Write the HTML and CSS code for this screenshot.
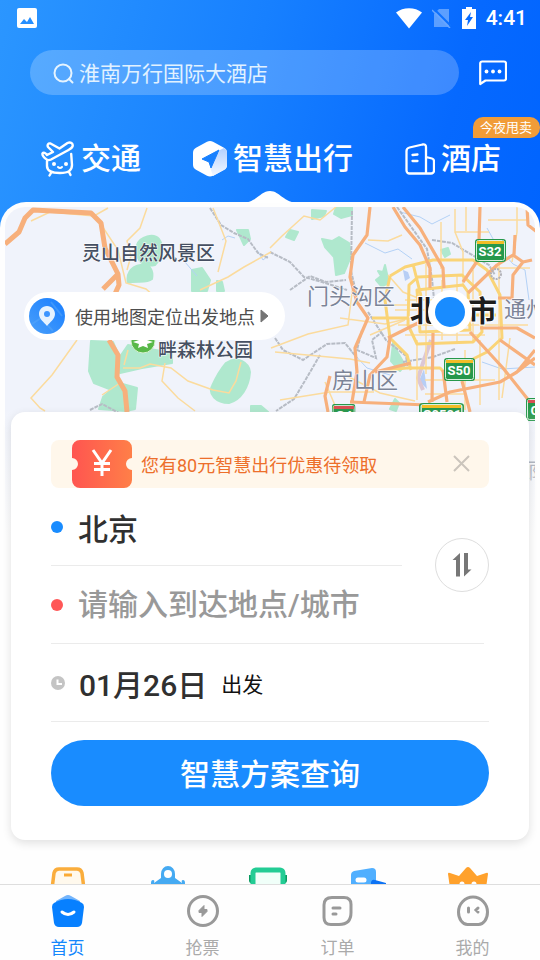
FILE: index.html
```html
<!DOCTYPE html>
<html lang="zh-CN">
<head>
<meta charset="utf-8">
<meta name="viewport" content="width=device-width, initial-scale=1">
<title>智慧出行</title>
<link rel="stylesheet" href="styles.css">
</head>
<body>
<div class="screen">
  <header class="header">
    <div class="status">
      <svg width="20" height="20" viewBox="0 0 20 20"><rect width="20" height="20" rx="2" fill="#fff"/><path d="M3 16l4-5 3 3 3-5 4 7z" fill="#268fff"/></svg>
      <span class="status-right">
        <svg width="26" height="21" viewBox="0 0 26 21"><path d="M0 4.500C7-1.200 19-1.200 26 4.500L13 20.500z" fill="#fff"/></svg>
        <svg width="20" height="20" viewBox="0 0 20 20"><path d="M7 1h10v18H2V6z" fill="#5c9fff"/><path d="M2 1l17 17" stroke="#0b70ff" stroke-width="2"/><path d="M0 2l18 18" stroke="#68a6ff" stroke-width="1.500"/></svg>
        <svg width="14" height="22" viewBox="0 0 14 22"><path d="M4 0h6v2h4v20H0V2h4z" fill="#fff"/><path d="M9 5L3 13h3l-1 6 6-9H8z" fill="#086cff"/></svg>
        <time>4:41</time>
      </span>
    </div>
    <div class="search-row">
      <label class="search">
        <svg width="22" height="22" viewBox="0 0 22 22" fill="none" stroke="#e6f4ff" stroke-width="2" stroke-linecap="round"><circle cx="10" cy="10" r="8.500"/><path d="M16 16l3.500 3.500"/></svg>
        <input type="search" placeholder="淮南万行国际大酒店" aria-label="淮南万行国际大酒店">
      </label>
      <button class="chat" aria-label="消息">
        <svg width="28" height="26" viewBox="0 0 28 26"><path d="M3 1.500h22a2 2 0 0 1 2 2v15a2 2 0 0 1-2 2H6.500L1.200 24V3.500a2 2 0 0 1 2-2z" fill="none" stroke="#fff" stroke-width="2.200" stroke-linejoin="round"/><g fill="#fff"><circle cx="7.500" cy="11.500" r="1.900"/><circle cx="14" cy="11.500" r="1.900"/><circle cx="20.500" cy="11.500" r="1.900"/></g></svg>
      </button>
    </div>
    <nav class="tabs">
      <a href="#traffic" class="tab">
        <svg width="34" height="36" viewBox="0 0 34 36" fill="none" stroke="#fff" stroke-width="2.400" stroke-linecap="round" stroke-linejoin="round"><path d="M5 18c-2-1-4-4-3.500-5.500C2.500 11 4.500 12 6 14l6-3-5-5c-1-2 0-4 2.500-3.500l9 5 8-5.500c3-1.500 6 .500 5 3.500-.500 1.500-2 2.500-4 3.500L10 18.500c-2 1-4 .500-5-.500z"/><path d="M6 20v5c0 5 5 7 13 7s12-2 12-8l-.800-11M10 32l-1.500 2.500M28 31l1.500 3"/><g fill="#fff" stroke="none"><circle cx="13" cy="23" r="2"/><circle cx="25" cy="23" r="2"/></g><path d="M17 26q2 2 4 0" stroke-width="2"/></svg>
        <span>交通</span>
      </a>
      <a href="#smart" class="tab" aria-current="page">
        <svg width="34" height="36" viewBox="0 0 34 36"><defs><linearGradient id="hex" x1="0" y1="0" x2="0" y2="1"><stop offset="0" stop-color="#b3d0ff"/><stop offset="1" stop-color="#f4f8ff"/></linearGradient></defs><path d="M14 .800q3-1.600 6 0l11 6q3 1.600 3 5v12q0 3.500-3 5l-11 6q-3 1.600-6 0l-11-6q-3-1.600-3-5v-12q0-3.500 3-5z" fill="#fff"/><path d="M27 9l4-2q3 1.600 3 5v12q0 3.500-3 5l-11 6-3-9z" fill="url(#hex)"/><path d="M9 18L26 9 18 27l-2-6z" fill="#1780ff" stroke="#1780ff" stroke-linejoin="round"/></svg>
        <span>智慧出行</span>
      </a>
      <a href="#hotel" class="tab">
        <svg width="30" height="32" viewBox="0 0 30 32" fill="none" stroke="#fff" stroke-width="2.300" stroke-linecap="round" stroke-linejoin="round"><path d="M21 30.500H4.500a3 3 0 0 1-3-3V8c0-2 1-3 3-3.500l13-3C20 1 21 2 21 4zM21 14l6 1.500q2 .500 2 3v9a3 3 0 0 1-3 3h-5M7.500 12l5-.500M7.500 18h5"/></svg>
        <span>酒店</span>
        <em class="badge">今夜甩卖</em>
      </a>
    </nav>
  </header>

  <main class="panel">
    <svg class="notch" width="60" height="13" viewBox="0 0 60 13"><path d="M0 13C17 13 20 1 30 1S43 13 60 13z" fill="#fff"/></svg>
    <section class="map-wrap">
      <svg class="map" viewBox="0 0 530 330" preserveAspectRatio="xMidYMin slice">
        <defs>
          <g id="shield"><rect width="31" height="23" rx="3" fill="#26984b"/><rect x="1.500" y="1.500" width="28" height="20" rx="2" fill="none" stroke="#d9f0df"/><rect x="2" y="2" width="27" height="3" fill="#f2bd26"/></g>
        </defs>
        <rect width="530" height="330" fill="#f0f3fb"/>
        <g transform="translate(-5 -207)">
          <g fill="#afe8ce" stroke="#afe8ce" stroke-width="2" stroke-linejoin="round">
            <path d="M137 245c3-9 17-12 22-6 6 8 2 20-4 26-8 2-16-1-18-10zM140 265c8-2 14 4 12 14-6 5-16 1-24 4-2-8 2-16 12-18z"/>
            <path d="M192 270l10-2 8 12-3 11h-15zM217 281l5 1 2 9h-7zM237 230l11 0 2 9-6 6z"/>
            <path d="M91 341l22 1 5 12 0 26-6 10-18-7-5-12zM128 345l44 8 0 10-30 5-22 5-3-12zM119 383l18 5-2 21-9 2-27-2 4-12z"/>
            <path d="M226 363c12-8 23 0 24 9-1 15-9 28-21 31-13 0-21-9-17-17 5-11 8-16 14-23zM251 406l10 0 7 6h-17z"/>
            <path d="M312 210l14 1-2 5-12 3zM336 207h16v8l-11 3-7-4zM290 230l8 2-4 8-8-3zM322 239l10 2 7-4 10 6 2 13-7 17-8 2-2-18-9-10zM385 265l2 9 1 9-6 4-6-7 5-4-3-5 5 1zM441 250l7-2 2 6-5 3zM393 343l5 10 7 12-5 6-9-10zM395 399l4 4-3 8-6-2z"/>
          </g>
          <path d="M403 270l5 2 2 6-5 3zM424 369l3 20-8-8z" fill="#b7cef5"/>
          <g fill="none" stroke="#b3d1f6" stroke-width="1">
            <path d="M365 243l20 10 13-4 14 10M400 212l20 5 12 7 18-9M487 228l10 18 16 18 12 6 4 30M222 240l6-4 7 2M257 250l6 10 5-4"/>
            <path d="M350 350l17 18 23 7M482 362l20 7 33-2M185 262l12 14"/>
          </g>
          <g fill="none" stroke="#b7bcc5" stroke-width="2" stroke-dasharray="4 1">
            <path d="M210 208l11 17 13 8 14 6 10 14 10 5M270 252l20 10 14 15 18 5 25 8M290 290l20-14 16 6 20-2M368 312l18 28 20 16 2 13M352 211l-1 60 6 25M397 207l30 42 5 30 2 20M432 240l20 3 37 22 6 10"/>
            <path d="M362 330l-5 20 19 8-4-18 10-8M275 338l8 12 20 10 24-16 18-1 12 15M320 355l-14 24-12 20-18 12M403 362l30-5 22-8M90 410l12-6 17 9"/>
          </g>
          <path d="M431 340l-7 20-6 18 5 12" fill="none" stroke="#dcc7d4" stroke-width="4"/>
          <g fill="none" stroke="#fbdb9d" stroke-width="1.500">
            <path d="M31 221l19-9 44 4 14-8M147 208l-7 20-13 13 4 15-4 14M98 220l20 30 8 33 20 6 10 9M213 208l6 15 7 18-8 31M270 248l12-12 22-20 16 4 16-13M200 290l28-13 16-10 27-15M77 340l-25 35-21 23 9 10 5 3M128 350l-4 15M102 395l18-12M165 363l-3 18 16 17 17 13M123 368l17 0 10-4 21 4 17 13 25 9 16 3 7-12 5-19"/>
            <path d="M368 240l20 1 14-6M353 285l-5 40-40 9-37 14M275 352l75 7 20 4M340 318l45 6 25-6M370 335l35-15M388 275l15 17 20 8M390 305h30M455 209l0 23 34 0M466 207v24M488 220h39M491 268h39M499 250v150M517 207v25l-5 30M455 232l8 20v33M441 222v47M426 264v110M442 280v60M457 276v67M473 270v72M405 300h80M395 310h35M398 325h130M405 335h80M417 340v60M465 350v60M480 340v65M425 380h70M425 394h40M345 375l35 18 35 8M280 400l50-8 44 0M325 382l12 28M510 338l-8 60"/>
          </g>
          <g fill="none" stroke="#fad477" stroke-width="3" stroke-linejoin="round">
            <path d="M390 276l15-9 28-7h40l14 10 13 25 2 43-15 14-14 7M390 276l-5 24 5 38 17 17 4 15M385 370l22-2h33l6 6M409 285l9-8 44-2 18 17 2 40-9 10-56 2-9-19zM417 290l46-5 5 7 2 38-50 2zM413 264l8 32M372 318h36M476 315h20"/>
          </g>
          <g fill="none" stroke="#f7b07c" stroke-width="3.200" stroke-linejoin="round">
            <path d="M5 244l14-12 6-14 8-8 58 3 10 10 4 25 13 26 1 11-9 20M118 274l-15 15M109 340l9 15-1 22 8 14 2 21" stroke-width="5"/>
            <path d="M370 207l-3 28-14 20-3 22 7 25 11 16-13 30 2 24-5 30M393 207l12 20 15 18 10 23v20M403 207l17 21 23 40 1 20M480 207l-1 33M478 260l-15 22M468 293l29-28 16-10 10 7 9-2M515 235l-1 20M523 262l-10 13-1 23h-14M527 207l1 18 9 7M388 338l32-16M433 333l-1 69M470 332l33 36 27 34M480 328h37l18 10M428 402l22-10 50-10 17-10 18-14M500 340l35 25M350 402l78 3M390 338l-3 19-17 18-6 27M375 372l36-9M462 381l8 31M443 370l4 32M330 376l-5 20 3 16M535 350l-18 22"/>
          </g>
          <circle cx="496" cy="274" r="5" fill="none" stroke="#b2b2b8" stroke-width="2" stroke-dasharray="2 1"/>
          <use href="#shield" x="475" y="239"/><use href="#shield" x="444" y="358"/>
          <use href="#shield" transform="translate(419 403) scale(1.450 1)"/><use href="#shield" transform="translate(332 404) scale(.75 1)"/><use href="#shield" x="526" y="398"/>
          <path d="M334 406h20v3h-20zM528 400h7v3h-7z" fill="#d94f53"/>
          <g class="road-label"><text x="490" y="256">S32</text><text x="459" y="375">S50</text><text x="442" y="419">G0501</text><text x="344" y="420">G4</text><text x="535" y="415">G</text></g>
          <circle cx="143" cy="341" r="12" fill="#58b848" stroke="#d6f0cf"/><path d="M143 332l4 8 6 2-6 2 1 4-5-2-5 2 1-4-6-2 6-2z" fill="#fff"/>
          <g class="place dark"><text x="82" y="260">灵山自然风景区</text><text x="158" y="357">畔森林公园</text></g>
          <g class="place district"><text x="307" y="304">门头沟区</text><text x="332" y="388">房山区</text><text x="504" y="317">通州</text><text x="516" y="478">廊坊</text></g>
          <text class="city" x="410" y="322">北京市</text>
          <circle cx="450" cy="312" r="22" fill="#fff"/><circle cx="450" cy="312" r="15" fill="#198cff"/>
        </g>
      </svg>
      <button class="locate">
        <svg width="36" height="36" viewBox="0 0 36 36"><defs><linearGradient id="pinbg" x1="0" y1="1" x2="1" y2="0"><stop stop-color="#4a9ffa"/><stop offset="1" stop-color="#187eff"/></linearGradient></defs><circle cx="18" cy="18" r="18" fill="url(#pinbg)"/><path d="M3 26l9-6 12 13M22 4l11 14" fill="none" stroke="#57a7fa" stroke-width="2" opacity=".5"/><path d="M18 8c5 0 8 4 8 8 0 5-5 8-8 12-3-4-8-7-8-12 0-4 3-8 8-8z" fill="#e5f2ff"/><circle cx="18" cy="16" r="3" fill="#3c95ff"/></svg>
        <span>使用地图定位出发地点</span>
        <svg width="9" height="14" viewBox="0 0 9 14"><path d="M1 1l7 6-7 6z" fill="#747474" stroke="#747474" stroke-linejoin="round"/></svg>
      </button>
    </section>

    <form class="card">
      <div class="coupon">
        <svg width="60" height="48" viewBox="0 0 60 48"><defs><linearGradient id="ticket"><stop stop-color="#ff5550"/><stop offset="1" stop-color="#ff7f48"/></linearGradient></defs><path d="M8 0h44a8 8 0 0 1 8 8v10a6 6 0 0 0 0 12v10a8 8 0 0 1-8 8H8a8 8 0 0 1-8-8V30a6 6 0 0 0 0-12V8a8 8 0 0 1 8-8z" fill="url(#ticket)"/><path d="M21 10l9 13 9-13M30 22v14M22 23.500h16M22 29.500h16" fill="none" stroke="#fff" stroke-width="3"/></svg>
        <p>您有80元智慧出行优惠待领取</p>
        <button type="button" class="close" aria-label="关闭"><svg width="18" height="18" viewBox="0 0 18 18"><path d="M1 1l15 15M16 1L1 16" stroke="#cbc5bc" stroke-width="2"/></svg></button>
      </div>
      <div class="route">
        <label class="field from"><i class="dot blue"></i><input type="text" value="北京" aria-label="出发"></label>
        <label class="field to"><i class="dot red"></i><input type="text" placeholder="请输入到达地点/城市" aria-label="请输入到达地点/城市"></label>
        <button type="button" class="swap" aria-label="交换"><svg width="22" height="26" viewBox="0 0 22 26" fill="#777"><path d="M5 24.500V8H1.500L9 1v23.500zM13 1h4v16.500h3.500L13 24.500z"/></svg></button>
      </div>
      <button type="button" class="field date">
        <svg width="14" height="14" viewBox="0 0 14 14"><circle cx="7" cy="7" r="7" fill="#c4c4c4"/><path d="M6.500 3.500V8H11" stroke="#fff" stroke-width="2" fill="none"/></svg>
        <strong>01月26日</strong><span>出发</span>
      </button>
      <button type="submit" class="submit">智慧方案查询</button>
    </form>

    <div class="links">
      <svg width="36" height="36" viewBox="0 0 36 36"><path d="M9 3h18q4 0 5 4l2 16v12H2V23L4 7q1-4 5-4z" fill="#fff9ed" stroke="#faad3c" stroke-width="3.500"/><path d="M14 9h8" stroke="#faaa35" stroke-width="3"/></svg>
      <svg width="34" height="36" viewBox="0 0 34 36"><path d="M10 8a7 8 0 0 1 14 0v4l7 5q-1-3 1-3 2 0 2 3v19H0V17q0-3 2-3 2 0 1 3l7-5z" fill="#45aaf2"/><circle cx="17" cy="8" r="4" fill="#fff"/></svg>
      <svg width="38" height="36" viewBox="0 0 38 36"><path d="M0 9h5v8H2q-2 0-2-3zM33 9h5v5q0 3-2 3h-3z" fill="#089b60"/><rect x="4" y="4" width="30" height="30" rx="3" fill="#f0fff9" stroke="#23cc94" stroke-width="5"/></svg>
      <svg width="36" height="36" viewBox="0 0 36 36"><path d="M1 9q0-3 3-4l18-3q4 0 4 4v30H1z" fill="#50afff"/><path d="M21 16q1-3 4-2l11 3v19H21z" fill="#0d73f4"/><path d="M8 14h6" stroke="#fff" stroke-width="5" stroke-linecap="round"/></svg>
      <svg width="40" height="36" viewBox="0 0 40 36"><path d="M0 8q0-2 2-1l9 3 7-8q2-2 4 0l7 8 9-3q2-1 2 1l-4 28H4z" fill="#ffa12c"/><path d="M14 20v-2M26 20v-2" stroke="#fff" stroke-width="5" stroke-linecap="round"/></svg>
    </div>
  </main>

  <nav class="bottom">
    <a href="#home" aria-current="page">
      <svg width="34" height="34" viewBox="0 0 34 34"><path d="M5 7l9-5q3-2 6 0l9 5v6H5z" fill="#75b5fb"/><path d="M3 9q14-8 28 0 2 1 2 4l-2 16q-1 4-5 4H8q-4 0-5-4L1 13q0-3 2-4z" fill="#0780ff"/><path d="M11 18q6 5 12 0" fill="none" stroke="#fff" stroke-width="3" stroke-linecap="round"/></svg>
      <span>首页</span>
    </a>
    <a href="#grab">
      <svg width="34" height="34" viewBox="0 0 34 34"><circle cx="17" cy="17" r="14.500" fill="none" stroke="#999" stroke-width="3"/><path d="M18 11.500l-5 5v2h3v4l5-5v-2h-3z" fill="#999" stroke="#999" stroke-linejoin="round"/></svg>
      <span>抢票</span>
    </a>
    <a href="#orders">
      <svg width="34" height="34" viewBox="0 0 34 34" fill="none" stroke="#999" stroke-width="3" stroke-linecap="round"><path d="M11 3.500h12q7 0 7 7v8q0 12-12 12h-8q-7 0-7-7V11q0-7.500 8-7.500z"/><path d="M12 14h7M12 20h3"/></svg>
      <span>订单</span>
    </a>
    <a href="#me">
      <svg width="34" height="34" viewBox="0 0 34 34" fill="none" stroke="#999" stroke-width="3" stroke-linecap="round"><path d="M17 3c8 0 14.500 7 14.500 15 0 7-4 12.500-9 12.500h-11c-5 0-9-5.500-9-12.500C2.500 10 9 3 17 3z"/><path d="M12.500 14v4M22 14l-2 2 2 2"/></svg>
      <span>我的</span>
    </a>
  </nav>
</div>
</body>
</html>
```
FILE: styles.css
```css
* { box-sizing: border-box; }
body { margin: 0; }
body, button, input { font-family: Roboto, "Noto Sans CJK SC", sans-serif; }
button { border: 0; padding: 0; background: none; color: inherit; cursor: pointer; }
input { border: 0; outline: 0; padding: 0; background: none; min-width: 0; }
a { color: inherit; text-decoration: none; }
svg { display: block; flex: none; }

.screen { height: 100vh; display: flex; flex-direction: column; overflow: hidden; background: #fefefe; }

.header {
  flex: none;
  padding-bottom: 54px;
  color: #fff;
  background: linear-gradient(105deg, #2b96ff 0%, #1780ff 45%, #0669ff 80%, #0064ff 100%);
}
.status { height: 36px; padding: 0 13px 0 17px; display: flex; align-items: center; justify-content: space-between; }
.status-right { display: flex; align-items: center; gap: 10px; }
.status time { font-size: 21px; line-height: 24px; font-weight: 500; }

.search-row { display: flex; align-items: center; gap: 20px; padding: 14px 33px 0 30px; }
.search {
  flex: 1;
  height: 45px;
  padding: 2px 23px 0;
  display: flex;
  align-items: center;
  gap: 4px;
  border-radius: 23px;
  background: rgba(255, 255, 255, .22);
}
.search input { flex: 1; font-size: 21px; color: #fff; }
.search input::placeholder { color: #e2f2ff; opacity: 1; }
.chat { flex: none; }

.tabs { display: flex; justify-content: space-between; padding: 42px 39px 0 41px; }
.tab { position: relative; display: flex; align-items: center; gap: 6px; height: 44px; font-size: 30px; line-height: 44px; font-weight: 500; }
.badge {
  position: absolute;
  right: -39px;
  top: -20px;
  padding: 0 8px 0 7px;
  font-size: 13px;
  line-height: 21px;
  font-style: normal;
  font-weight: 400;
  white-space: nowrap;
  background: #f19c38;
  border-radius: 10px 10px 10px 0;
}

.panel { position: relative; flex: 1; min-height: 0; margin-top: -33px; padding: 5px 0 0; border-radius: 26px 26px 0 0; background: #fefefe; }
.notch { position: absolute; left: 50%; top: -12px; margin-left: -30px; }
.map-wrap { position: relative; height: 330px; margin: 0 5px; }
.map { width: 100%; height: 100%; border-radius: 20px 20px 0 0; }
.map-wrap::after {
  content: "";
  position: absolute;
  inset: 200px 0 0;
  background: linear-gradient(rgba(254, 254, 254, 0), #fefefe);
  pointer-events: none;
}
.place { font-family: "Noto Sans CJK SC", sans-serif; paint-order: stroke; stroke: #fff; stroke-width: 1px; }
.dark { font-size: 19px; font-weight: 500; fill: #454f62; }
.district { font-size: 22px; fill: #7b8498; }
.city { font: 700 29px "Noto Sans CJK SC", sans-serif; fill: #1c1c1c; paint-order: stroke; stroke: #fff; stroke-width: 2px; }
.road-label { font: 700 13px Roboto, sans-serif; fill: #fff; text-anchor: middle; }

.locate {
  position: absolute;
  left: 19px;
  top: 85px;
  height: 48px;
  padding: 0 16px 0 5px;
  display: flex;
  align-items: center;
  border-radius: 24px;
  background: #fff;
  color: #4d4d4d;
  font-size: 18px;
}
.locate span { margin: 0 5px 0 10px; }

.card {
  position: relative;
  margin: -125px 11px 0;
  padding: 28px 40px 34px;
  border-radius: 14px;
  background: #fff;
  box-shadow: 0 3px 10px rgba(0, 0, 0, .12);
}
.coupon { height: 48px; padding: 0 18px 0 21px; display: flex; align-items: center; gap: 9px; border-radius: 8px; background: #fff7eb; color: #ed6f2b; }
.coupon p { flex: 1; margin: 0; padding-top: 3px; font-size: 18px; line-height: 26px; }
.close { flex: none; }

.route { position: relative; }
.field { display: flex; align-items: center; height: 78px; border-bottom: 1px solid #ebebeb; }
.field input { flex: 1; height: 44px; font-size: 30px; font-weight: 500; color: #303030; }
.field input::placeholder { color: #999; opacity: 1; }
.from { margin-right: 87px; }
.to { margin-right: 5px; }
.dot { flex: none; width: 12px; height: 12px; margin-right: 15px; border-radius: 50%; }
.blue { background: #198cff; }
.red { background: #ff5757; }
.swap {
  position: absolute;
  right: 0;
  top: 50px;
  width: 54px;
  height: 54px;
  display: grid;
  place-items: center;
  border: 1px solid #dedede;
  border-radius: 50%;
  background: #fff;
}
.date { width: 100%; font-size: 21px; color: #111; }
.date strong { margin: 0 14px; font-size: 30px; font-weight: 500; color: #303030; }

.submit { display: block; width: 100%; height: 66px; margin-top: 18px; padding-bottom: 2px; border-radius: 33px; background: #198cff; color: #fff; font-size: 30px; font-weight: 500; }

.links { display: grid; grid-template-columns: repeat(5, 1fr); justify-items: center; padding: 26px 22px 0 18px; }

.bottom { position: relative; flex: none; height: 76px; display: grid; grid-template-columns: repeat(4, 1fr); border-top: 1px solid #dedede; background: #fefefe; }
.bottom a { display: flex; flex-direction: column; align-items: center; gap: 8px; padding-top: 9px; font-size: 17px; line-height: 24px; color: #aaa; }
.bottom a[aria-current] { color: #1688fc; }
```
